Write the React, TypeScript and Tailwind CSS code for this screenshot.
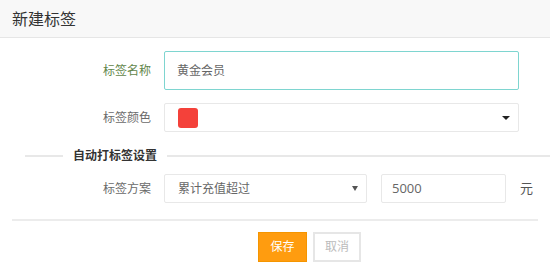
import React from "react";

const F = { fontFamily: '"Open Sans","Noto Sans CJK SC",sans-serif' };

export default function App() {
  return (
    <div className="w-[550px] h-[278px] bg-white overflow-hidden text-[12px] text-[#6a6a6a]" style={F}>
      <div className="h-[38px] bg-[#f8f8f8] border-b border-[#e6e6e6] px-[12px] flex items-center text-[16px] text-[#333]">
        新建标签
      </div>
      <div className="pt-[13px]">
        <div className="flex items-center">
          <div className="w-[151px] text-right text-[#62864a]">标签名称</div>
          <div className="ml-[13px] w-[355px] h-[39px] border border-[#7ed5d0] rounded-[2px] flex items-center px-[12px] text-[#666]">
            黄金会员
          </div>
        </div>
        <div className="flex items-center mt-[13px]">
          <div className="w-[151px] text-right">标签颜色</div>
          <div className="ml-[13px] w-[355px] h-[29px] border border-[#e8e8e8] rounded-[2px] flex items-center pl-[13px] pr-[8px]">
            <div className="w-[20px] h-[20px] rounded-[3px] bg-[#f4413a]" />
            <div className="flex-1" />
            <div className="w-0 h-0 border-l-[4px] border-r-[4px] border-t-[4px] border-l-transparent border-r-transparent border-t-[#222]" />
          </div>
        </div>
        <div className="flex items-center mt-[14px] h-[20px]">
          <div className="ml-[25px] w-[38px] h-[2px] bg-[#e8e8e8]" />
          <div className="mx-[10px] font-bold text-[#333]">自动打标签设置</div>
          <div className="flex-1 h-[2px] bg-[#e8e8e8]" />
        </div>
        <div className="flex items-center mt-[8px]">
          <div className="w-[151px] text-right">标签方案</div>
          <div className="ml-[13px] w-[203px] h-[29px] border border-[#e8e8e8] rounded-[2px] flex items-center pl-[13px] pr-[8px] text-[#666]">
            累计充值超过
            <div className="flex-1" />
            <div className="w-0 h-0 border-l-[3px] border-r-[3px] border-t-[5px] border-l-transparent border-r-transparent border-t-[#555]" />
          </div>
          <div className="ml-[14px] w-[125px] h-[29px] border border-[#e8e8e8] rounded-[2px] flex items-center px-[10px] text-[#666] text-[13px]">
            5000
          </div>
          <div className="ml-[14px] text-[#555] text-[13px]">元</div>
        </div>
        <div className="mx-[12px] mt-[16px] h-[2px] bg-[#ececec]" />
        <div className="flex mt-[11px] pl-[258px] gap-[6px]">
          <div className="w-[49px] h-[30px] bg-[#ff9c0f] border border-[#f59500] text-white flex items-center justify-center">保存</div>
          <div className="w-[48px] h-[30px] border-2 border-[#e6e6e6] text-[#bbb] flex items-center justify-center">取消</div>
        </div>
      </div>
    </div>
  );
}
